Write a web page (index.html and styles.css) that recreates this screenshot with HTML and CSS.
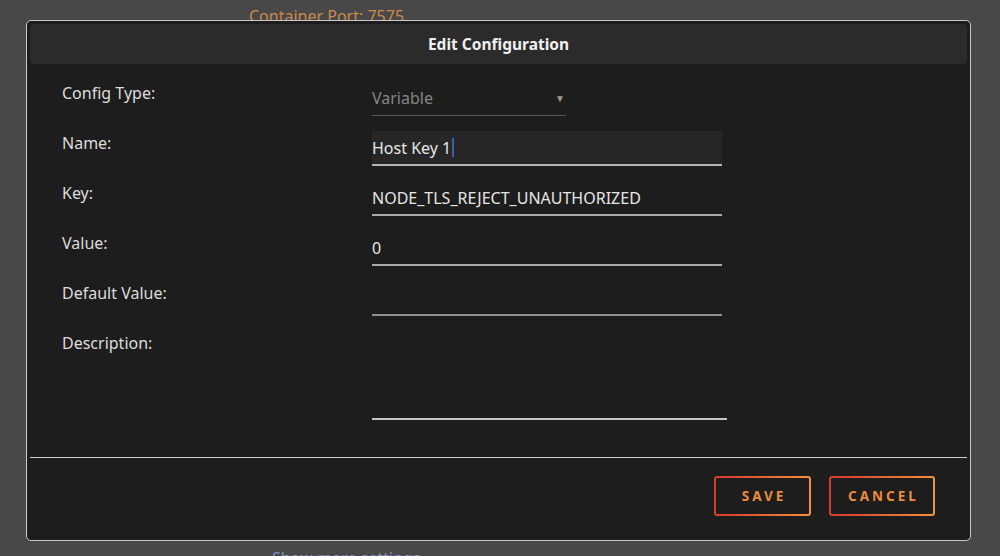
FILE: index.html
```html
<!DOCTYPE html>
<html>
<head>
<meta charset="utf-8">
<link rel="stylesheet" href="styles.css">
</head>
<body>
<div class="page">
  <div class="bg-port">Container Port: 7575</div>
  <div class="bg-more"><span class="chev">‹‹</span>Show more settings</div>
</div>
<div class="modal">
  <div class="modal-header">Edit Configuration</div>
  <div class="form">
    <div class="label">Config Type:</div>
    <div class="cell"><div class="field select"><span>Variable</span><span class="arrow">▼</span></div></div>
    <div class="label">Name:</div>
    <div class="cell"><div class="field focused">Host Key 1<span class="caret"></span></div></div>
    <div class="label">Key:</div>
    <div class="cell"><div class="field">NODE_TLS_REJECT_UNAUTHORIZED</div></div>
    <div class="label">Value:</div>
    <div class="cell"><div class="field">0</div></div>
    <div class="label">Default Value:</div>
    <div class="cell"><div class="field dim"></div></div>
    <div class="label">Description:</div>
    <div class="cell"><div class="field textarea"></div></div>
  </div>
  <div class="divider"></div>
  <div class="footer">
    <button class="btn">SAVE</button>
    <button class="btn">CANCEL</button>
  </div>
</div>
</body>
</html>
```
FILE: styles.css
```css
html, body {
  margin: 0;
  padding: 0;
  height: 100%;
  overflow: hidden;
}
body {
  background: #484848;
  font-family: "Noto Sans", "Open Sans", sans-serif;
}
.page {
  padding: 5px 0 0 249px;
}
.bg-port {
  font-size: 16px;
  line-height: 22px;
  color: #c98a4b;
}
.bg-more {
  margin-top: 520px;
  font-size: 16px;
  line-height: 22px;
  color: #7f93c9;
}
.chev {
  display: inline-block;
  margin: 0 8px 0 3px;
  letter-spacing: 1px;
}
.modal {
  position: fixed;
  left: 26px;
  top: 20px;
  width: 945px;
  height: 521px;
  box-sizing: border-box;
  border: 1px solid #cacaca;
  border-radius: 5px;
  background: #1d1d1d;
  padding: 3px;
  display: flex;
  flex-direction: column;
}
.modal-header {
  height: 40px;
  flex: none;
  background: #2b2b2b;
  border-radius: 4px;
  display: flex;
  align-items: center;
  justify-content: center;
  color: #f0f0f0;
  font-weight: 700;
  font-size: 15.5px;
}
.form {
  padding: 4px 0 0 32px;
  display: grid;
  grid-template-columns: 310px 1fr;
  grid-template-rows: repeat(5, 50px) 102px;
}
.label {
  padding-top: 15px;
  line-height: 20px;
  font-size: 16px;
  color: #dcdcdc;
}
.cell {
  padding-top: 13px;
}
.field {
  width: 350px;
  height: 35px;
  box-sizing: border-box;
  border-bottom: 2px solid #a9a9a9;
  display: flex;
  align-items: center;
  font-size: 16px;
  color: #e6e6e6;
}
.field.focused {
  background: #262626;
  border-bottom-color: #b5b5b5;
}
.caret {
  display: inline-block;
  width: 2px;
  height: 19px;
  background: #3a5fae;
  margin-left: 1px;
}
.field.select {
  width: 194px;
  border-bottom: 1px solid #565656;
  color: #858585;
  justify-content: space-between;
}
.arrow {
  font-size: 10px;
  color: #9a9a9a;
  padding-right: 1px;
}
.field.dim {
  border-bottom-color: #909090;
}
.field.textarea {
  width: 355px;
  height: 89px;
  border-bottom-color: #c4c4c4;
}
.divider {
  margin-top: 37px;
  height: 1px;
  background: #cfcfcf;
  flex: none;
}
.footer {
  display: flex;
  justify-content: flex-end;
  gap: 18px;
  padding: 18px 32px 0 0;
}
.btn {
  height: 40px;
  box-sizing: border-box;
  border: 2px solid transparent;
  border-radius: 3px;
  background: linear-gradient(#1d1d1d, #1d1d1d) padding-box,
              linear-gradient(90deg, #d6382f, #f2923c) border-box;
  color: #ec8b3c;
  font-family: "Noto Sans", "Open Sans", sans-serif;
  font-weight: 700;
  font-size: 13.5px;
  letter-spacing: 3px;
  padding: 0 0 0 3px;
  cursor: pointer;
}
.btn:first-child {
  width: 97px;
}
.btn:last-child {
  width: 106px;
}
```
